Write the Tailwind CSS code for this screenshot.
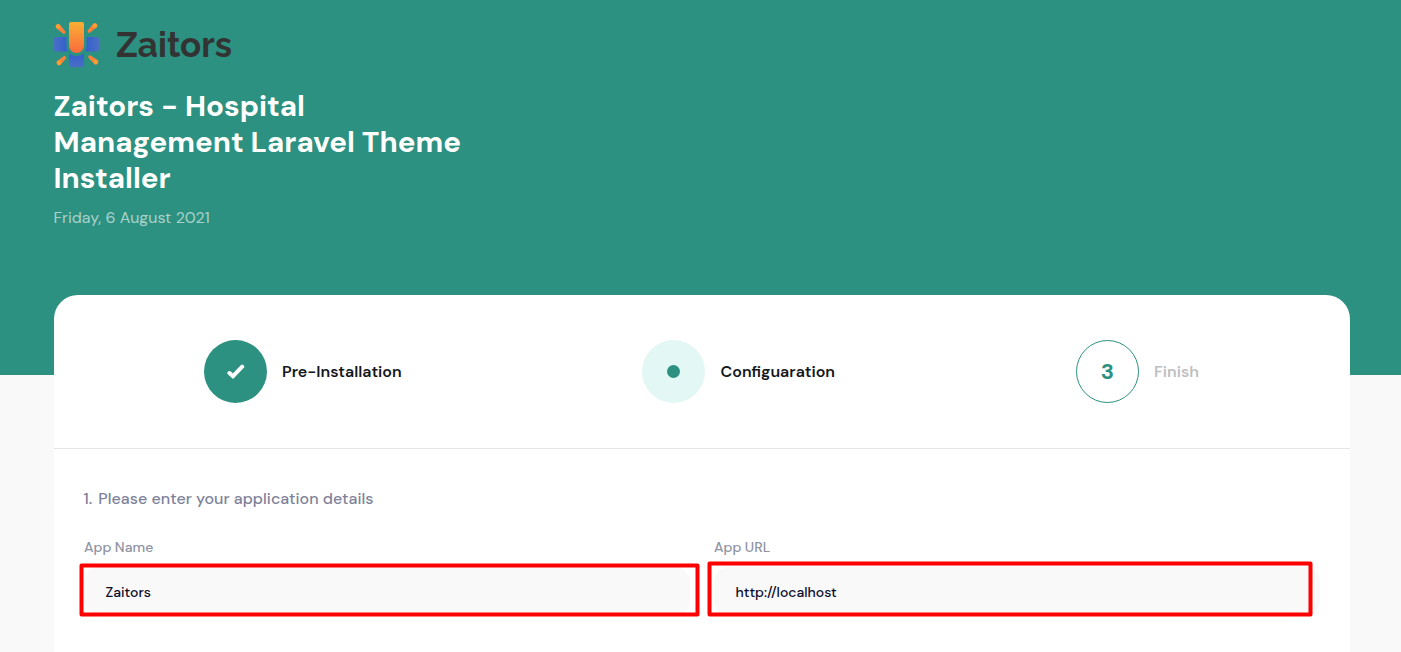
<!DOCTYPE html>
<html lang="en">
<head>
<meta charset="utf-8">
<title>Zaitors Installer</title>
<script src="https://cdn.jsdelivr.net/npm/@tailwindcss/browser@4"></script>
</head>
<body class="h-[652px] overflow-hidden bg-[#f9f9f9] font-['DM_Sans','Inter',sans-serif]">
<div class="h-full bg-linear-to-b from-[#2c9180] from-[375px] to-[#f9f9f9] to-[375px] pl-[54px] pr-[51px]">
  <header class="h-[295px] pt-[21px]">
    <div class="flex h-[48px] items-center">
      <svg class="-ml-px h-[48px] w-[48px] shrink-0" viewBox="0 0 48 48">
        <defs>
          <linearGradient id="o" x1="0" y1="0" x2="0" y2="1"><stop offset="0" stop-color="#f8af34"/><stop offset="1" stop-color="#fb6a3c"/></linearGradient>
          <linearGradient id="bl" x1="0" y1="0" x2="1" y2="0"><stop offset="0" stop-color="#4a6fc4"/><stop offset="1" stop-color="#325fcf"/></linearGradient>
          <linearGradient id="br" x1="0" y1="0" x2="1" y2="0"><stop offset="0" stop-color="#325fcf"/><stop offset="1" stop-color="#4a6fc4"/></linearGradient>
          <linearGradient id="bb" x1="0" y1="0" x2="0" y2="1"><stop offset="0" stop-color="#325fcf"/><stop offset="1" stop-color="#4a6fc4"/></linearGradient>
        </defs>
        <path fill="url(#bl)" d="M3 16H13.500V25Q13.500 28 15 30.500H3Q.8 30.500 .8 28.300V18.200Q.8 16 3 16Z"/>
        <path fill="url(#br)" d="M33.500 16H43.800Q46 16 46 18.200V28.300Q46 30.500 43.800 30.500H32Q33.500 28 33.500 25Z"/>
        <path fill="url(#bb)" d="M16 32Q18.500 35 23.500 35T31 32V44Q31 46.200 28.800 46.200H18.200Q16 46.200 16 44Z"/>
        <path fill="url(#o)" d="M18 1H29Q31 1 31 3V24.500A7.500 7.500 0 0 1 16 24.500V3Q16 1 18 1Z"/>
        <g fill="#fb8237">
          <path d="M3.400 7.200A2.300 2.300 0 0 1 6.800 3.600L12.300 10.600Q12.800 13.200 10.300 12.700Z"/>
          <path d="M43.600 6.400A2.300 2.300 0 0 0 40.200 2.800L34.700 9.400Q34.200 12 36.700 11.800Z"/>
          <path d="M4.200 40A2.300 2.300 0 0 0 7.800 43.600L13 37.400Q13.400 34.600 11 34.900Z"/>
          <path d="M44.500 39A2.300 2.300 0 0 1 41 42.800L35.400 36.800Q34.800 34.200 37.200 34.300Z"/>
        </g>
        <g fill="#f9a035"><circle cx="5.100" cy="5.400" r="2.200"/><circle cx="41.900" cy="4.600" r="2.200"/><circle cx="6.100" cy="41.800" r="2.200"/><circle cx="42.700" cy="40.900" r="2.200"/></g>
      </svg>
      <span class="ml-[15px] font-['Raleway','Inter',sans-serif] text-[35px] leading-[48px] font-bold text-[#333]">Zaitors</span>
    </div>
    <h1 class="-ml-[0.5px] mt-[19px] text-[29.500px] leading-[36px] font-bold whitespace-nowrap text-white">Zaitors - Hospital<br>Management Laravel Theme<br>Installer</h1>
    <p class="-ml-[0.5px] mt-[10px] text-[16px] leading-[24px] text-white/60">Friday, 6 August 2021</p>
  </header>
  <main class="h-[357px] rounded-t-[24px] bg-white">
    <ol class="flex h-[154px] items-center border-b border-[#e5e5e5] pl-[150px] text-[16px] font-semibold text-[#15171c]">
      <li class="flex w-[438px] items-center gap-[15px]">
        <div class="flex size-[63px] items-center justify-center rounded-full bg-[#2c9180]">
          <svg class="h-[15px] w-[18px]" viewBox="0 0 18 15" fill="none" stroke="#fff" stroke-width="4" stroke-linecap="round"><path d="M2.400 9L6 12.200L15.200 2.700"/></svg>
        </div>
        <span>Pre-Installation</span>
      </li>
      <li class="flex w-[434px] items-center gap-[15.500px]">
        <div class="flex size-[63px] items-center justify-center rounded-full bg-[#e3f7f4]"><i class="size-[13px] rounded-full bg-[#2c9180]"></i></div>
        <span>Configuaration</span>
      </li>
      <li class="flex items-center gap-[15px]">
        <div class="flex size-[63px] items-center justify-center rounded-full border border-[#2c9180] text-[22px] font-bold text-[#2c9180]">3</div>
        <span class="text-[#bfbfbf]">Finish</span>
      </li>
    </ol>
    <form class="pl-[30px] pt-[38px]">
      <h2 class="-ml-[0.5px] flex gap-[6px] text-[16px] leading-[24px] font-medium tracking-[0.03px] text-[#7e8299]"><span>1.</span><span>Please enter your application details</span></h2>
      <div class="mt-[26px] grid grid-cols-[606px_606px] gap-[24px]">
        <label class="relative block text-[14px] leading-[20px] font-medium text-[#8f93a3]"><span>App Name</span>
          <div class="mt-[10px] flex h-[49px] items-center rounded-[15px] bg-[#f9f9f9] pt-px pl-[21.500px] text-[#0c0c2c]">Zaitors</div>
          <svg class="absolute top-[25px] -left-[5px] h-[56px] w-[622px]" fill="none" stroke="#f00" stroke-width="4" stroke-linejoin="round"><rect x="2.500" y="3.500" width="616" height="49"/></svg>
        </label>
        <label class="relative block text-[14px] leading-[20px] font-medium text-[#8f93a3]"><span>App URL</span>
          <div class="mt-[10px] flex h-[49px] items-center rounded-[15px] bg-[#f9f9f9] pt-px pl-[21.500px] text-[#0c0c2c]">http://localhost</div>
          <svg class="absolute top-[23px] -left-[7px] h-[58px] w-[608px]" fill="none" stroke="#f00" stroke-width="4" stroke-linejoin="round"><rect x="2.500" y="3.500" width="601" height="51"/></svg>
        </label>
      </div>
    </form>
  </main>
</div>
</body>
</html>
